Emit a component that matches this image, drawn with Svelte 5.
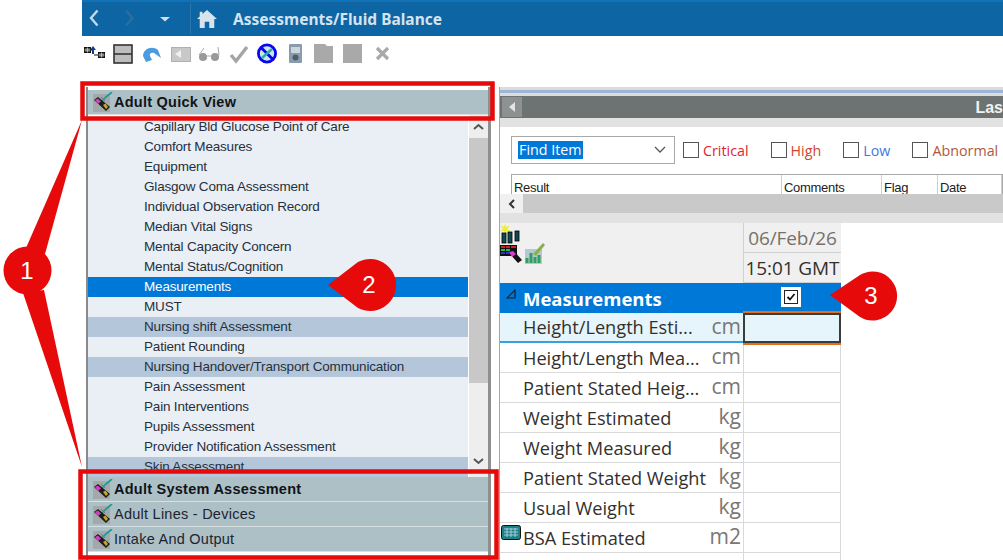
<script>
  // Fluid balance view, with the numbered callouts drawn on top
  const bands = ["Nursing shift Assessment", "Nursing Handover/Transport Communication", "Skin Assessment"];
  const items = [
    "Capillary Bld Glucose Point of Care",
    "Comfort Measures",
    "Equipment",
    "Glasgow Coma Assessment",
    "Individual Observation Record",
    "Median Vital Signs",
    "Mental Capacity Concern",
    "Mental Status/Cognition",
    "Measurements",
    "MUST",
    "Nursing shift Assessment",
    "Patient Rounding",
    "Nursing Handover/Transport Communication",
    "Pain Assessment",
    "Pain Interventions",
    "Pupils Assessment",
    "Provider Notification Assessment",
    "Skin Assessment",
  ];
  const measures = [
    ["Height/Length Esti...", "cm"],
    ["Height/Length Mea...", "cm"],
    ["Patient Stated Heig...", "cm"],
    ["Weight Estimated", "kg"],
    ["Weight Measured", "kg"],
    ["Patient Stated Weight", "kg"],
    ["Usual Weight", "kg"],
    ["BSA Estimated", "m2"],
  ];
  const flags = [
    ["Critical", "#e0242c"],
    ["High", "#d2452c"],
    ["Low", "#3f78e0"],
    ["Abnormal", "#b0593c"],
  ];
</script>

{#snippet penIcon()}
  <svg class="pen" width="20" height="20" viewBox="0 0 20 20">
    <rect x="0" y="2" width="17" height="18" fill="#a3a9ab" />
    <path d="M9 9 L13 5 L19 0" fill="none" stroke="#1f9a97" stroke-width="1.7" />
    <path d="M8 5 L12 9" stroke="#777" stroke-width="1" />
    <path d="M1 8 L5 5 L17 15 L13 19 Z" fill="#1c1c18" />
    <path d="M2 8 L5 6.5 L8 9.5 L5 12 Z" fill="#d23fc0" />
    <path d="M10 13 L12.5 11.5 L15 15 L13 17 Z" fill="#c9a626" />
  </svg>
{/snippet}

<div class="app">
  <header class="topbar">
    <svg class="nav" width="110" height="34" viewBox="0 0 110 34">
      <path d="M15.5 8.5 L9 16 L15.5 23.5" fill="none" stroke="#c4d8e8" stroke-width="2.4" />
      <path d="M44 8.5 L50.5 16 L44 23.5" fill="none" stroke="#2c6f9f" stroke-width="2.4" />
      <path d="M78 15 H88 L83 19.5 Z" fill="#cfdfeb" />
      <path d="M108.5 1 V32" stroke="#2a75ab" stroke-width="1" />
    </svg>
    <svg class="home" width="20" height="20" viewBox="0 0 22 20">
      <path d="M11 0 L22 10 H19 V20 H13.5 V13 H8.5 V20 H3 V10 H0 L3 7.2 V2 H6 V4.6 Z" fill="#d7e4ee" />
    </svg>
    <span class="title">Assessments/Fluid Balance</span>
  </header>

  <div class="toolbar">
    <svg width="310" height="24" viewBox="0 0 310 24">
      <rect x="2.5" y="6.5" width="6" height="5" fill="#555" stroke="#111" />
      <path d="M5.5 6.5 V11.5 M2.5 9 H8.5" stroke="#ddd" stroke-width="0.7" />
      <rect x="16.5" y="11.5" width="6" height="5" fill="#555" stroke="#111" />
      <path d="M19.5 11.5 V16.5 M16.5 14 H22.5" stroke="#ddd" stroke-width="0.7" />
      <path d="M11 5 L14 9 H12 V13 H10 V9 H8 Z" fill="#1a3a8c" />
      <path d="M8.5 9 H10 M12 14 H16" stroke="#111" />
      <rect x="32" y="4" width="18" height="18" fill="#bdbdbd" stroke="#333" stroke-width="1.6" />
      <path d="M32 13 H50" stroke="#333" stroke-width="1.6" />
      <path d="M61 15 C61 8 70 4 76 9 L79 17 L72 12 C69 11 67 13 68 15 L70 19 L64 21 Z" fill="#4a9be0" />
      <rect x="89.5" y="6.5" width="19" height="14" fill="#c8c8c8" stroke="#b0b0b0" />
      <path d="M93 13 L99 9 V17 Z" fill="#f0f0f0" />
      <circle cx="121" cy="16" r="4" fill="#999" /><circle cx="133" cy="16" r="4" fill="#999" />
      <path d="M117 14 L122 7 M125 15 H129 M137 14 L136 6" stroke="#aaa" fill="none" />
      <path d="M149 14 L154 20 L165 6" fill="none" stroke="#a5a5a5" stroke-width="3.4" />
      <circle cx="185" cy="12.5" r="8.6" fill="#c8e8e8" stroke="#0808e8" stroke-width="2.8" />
      <path d="M179 6.5 L191 18.5" stroke="#0808e8" stroke-width="2.8" />
      <path d="M180 17 L190 8" stroke="#30a8a8" stroke-width="2.4" />
      <rect x="207" y="3" width="13" height="19" rx="1" fill="#8a9cab" />
      <rect x="209" y="6" width="9" height="6" fill="#c9d6de" />
      <circle cx="213.5" cy="16.5" r="3" fill="#4e5e6b" />
      <path d="M232 3 H243 L245 5 H251 V22 H232 Z" fill="#a9a9a9" />
      <rect x="261" y="3" width="19" height="19" fill="#a9a9a9" />
      <path d="M295 7 L306 18 M306 7 L295 18" stroke="#a9a9a9" stroke-width="3.2" />
    </svg>
  </div>

  <div class="panes">
    <section class="left">
      <div class="band bold first">{@render penIcon()}Adult Quick View</div>
      <div class="list-wrap">
        <ul class="list">
          {#each items as item}
            <li class:shaded={bands.includes(item)} class:current={item === "Measurements"}>{item}</li>
          {/each}
        </ul>
        <div class="scroll">
          <svg width="19" height="23" viewBox="0 0 19 23"><path d="M5 14 L9.5 10 L14 14" fill="none" stroke="#555" stroke-width="2" /></svg>
          <div class="thumb"></div>
          <svg class="down" width="19" height="20" viewBox="0 0 19 20"><path d="M5 5 L9.5 9 L14 5" fill="none" stroke="#555" stroke-width="2" /></svg>
        </div>
      </div>
      <div class="band bold">{@render penIcon()}Adult System Assessment</div>
      <div class="band">{@render penIcon()}Adult Lines - Devices</div>
      <div class="band">{@render penIcon()}Intake And Output</div>
    </section>

    <section class="right">
      <div class="time-bar">
        <span class="back"><svg width="8" height="10" viewBox="0 0 8 10"><path d="M7 0 V10 L1 5 Z" fill="#e4e4e4" /></svg></span>
        <span class="last">Las</span>
      </div>
      <div class="filters">
        <div class="combo">
          <span class="find">Find Item</span>
          <svg width="12" height="8" viewBox="0 0 12 8"><path d="M1 1 L6 6 L11 1" fill="none" stroke="#555" stroke-width="1.3" /></svg>
        </div>
        {#each flags as [label, colour]}
          <span class="flag"><i class="box"></i><span style:color={colour}>{label}</span></span>
        {/each}
      </div>
      <div class="results">
        <span>Result</span><span>Comments</span><span>Flag</span><span>Date</span>
      </div>
      <div class="hscroll">
        <span><svg width="10" height="12" viewBox="0 0 10 12"><path d="M7 2 L3 6 L7 10" fill="none" stroke="#333" stroke-width="2" /></svg></span>
      </div>
      <div class="strip"></div>

      <div class="grid">
        <div class="icons">
          <svg width="46" height="42" viewBox="0 0 46 42">
            <path d="M5 0 L6 4 L10 2 L7 6 L11 8 L6 8 L5 12 L4 8 L0 8 L3 6 L0 2 L4 4 Z" fill="#eeee30" />
            <g fill="#0e4a50" stroke="#000" stroke-width="0.8">
              <rect x="2" y="10" width="4" height="10" /><rect x="8" y="9" width="4" height="11" /><rect x="15" y="8" width="4" height="10" />
            </g>
            <rect x="0" y="22" width="17" height="11" fill="#111" />
            <path d="M1 24 H5 M6 24 H10 M11 24 H16" stroke="#d02020" stroke-width="2" />
            <path d="M1 27 H5 M6 27 H10" stroke="#20c040" stroke-width="2" />
            <path d="M1 30 H5 M6 30 H10" stroke="#3030d0" stroke-width="2" />
            <path d="M9 30 L13 27 L22 37 L18 40 Z" fill="#111" />
            <path d="M9 29 L13 28 L16 31 L12 34 Z" fill="#d040d0" />
            <rect x="25" y="26" width="17" height="15" fill="#b4c8d4" />
            <path d="M27 40 V35 M31 40 V30 M35 40 V34 M39 40 V32" stroke="#30a060" stroke-width="3" />
            <path d="M33 31 L43 20 L45 22 L36 33 Z" fill="#88b050" />
          </svg>
        </div>
        <div class="date">06/Feb/26</div>
        <div class="date dark">15:01 GMT</div>
        <div class="section">
          <svg class="tri" width="10" height="10" viewBox="0 0 10 10"><path d="M1 9 H9 V1 Z" fill="none" stroke="#123" stroke-width="1.2" /></svg>
          <span>Measurements</span>
          <span class="tick"><svg width="20" height="20" viewBox="0 0 20 20"><rect width="20" height="20" fill="#fff" /><rect x="3.5" y="3.5" width="13" height="13" fill="#fff" stroke="#222" /><path d="M6.5 10 L9 12.5 L13.5 7" fill="none" stroke="#111" stroke-width="1.8" /></svg></span>
        </div>
        {#each measures as [name, unit], i}
          <div class="row" class:active={i === 0}>
            <span class="name">{name}</span><span class="unit">{unit}</span>
            {#if name === "BSA Estimated"}
              <svg class="calc" width="20" height="16" viewBox="0 0 20 16"><rect x="0.5" y="0.5" width="19" height="14" rx="2" fill="#1f7f86" stroke="#111" /><path d="M3 4 H17 M3 7 H17 M3 10 H17 M6 3 V12 M10 3 V12 M14 3 V12" stroke="#bde" stroke-width="0.8" /></svg>
            {/if}
          </div>
          <div class="cell" class:input={i === 0}></div>
        {/each}
        <div class="row"></div>
        <div class="cell"></div>
      </div>
    </section>
  </div>

  <!-- numbered callouts and red outlines, over everything -->
  <svg class="notes" width="1003" height="560" viewBox="0 0 1003 560">
    <g fill="none" stroke="#e60a0a" stroke-width="4.5">
      <rect x="82.5" y="83.5" width="410" height="35" />
      <rect x="80.5" y="471.5" width="416" height="86" />
    </g>
    <g fill="#e60a0a">
      <circle cx="27.5" cy="270.5" r="24" />
      <path d="M26 248 L82 120 L45 254 Z" />
      <path d="M23 293 L82 467 L44 290 Z" />
      <path d="M328 285 L358 262 A26 26 0 1 1 358 308 Z" />
      <path d="M830 295 L860 275 A24.5 24.5 0 1 1 860 317 Z" />
    </g>
    <g fill="#fff" font-family="Liberation Sans, sans-serif" font-size="24" text-anchor="middle">
      <text x="27" y="279">1</text>
      <text x="369" y="293">2</text>
      <text x="871" y="304">3</text>
    </g>
  </svg>
</div>

<style>
  :global(body) {
    margin: 0;
    background: #fff;
  }
  .app {
    position: relative;
    width: 1003px;
    height: 560px;
    padding-left: 82px;
    box-sizing: border-box;
    overflow: hidden;
    font-family: "Liberation Sans", sans-serif;
  }
  .topbar {
    display: flex;
    align-items: center;
    height: 36px;
    background: #0d65a3;
    border-top: 2px solid #1272b5;
    box-sizing: border-box;
  }
  .nav {
    flex: none;
  }
  .home {
    margin-left: 5px;
    flex: none;
  }
  .title {
    margin-left: 16px;
    color: #d5e3ee;
    font: 700 15.5px "Noto Sans", sans-serif;
  }
  .toolbar {
    height: 36px;
    padding-top: 5px;
    box-sizing: border-box;
  }
  .toolbar svg {
    display: block;
  }
  .panes {
    display: flex;
    margin-top: 15px;
    height: 473px;
  }
  .left {
    flex: none;
    width: 405px;
    margin-left: 4px;
    border-left: 2px solid #8a8a8a;
    border-right: 3px solid #8f8f8f;
    box-sizing: border-box;
  }
  .band {
    display: flex;
    align-items: center;
    gap: 1px;
    height: 25px;
    padding-left: 5px;
    background: #adc0c6;
    border-bottom: 1px solid #d8e0e3;
    box-sizing: border-box;
    color: #1c2430;
    font-size: 14.5px;
    letter-spacing: 0.25px;
  }
  .band.first {
    margin-top: 3px;
  }
  .bold {
    font-weight: 700;
    color: #10141a;
  }
  .pen {
    flex: none;
  }
  .list-wrap {
    display: flex;
    height: 362px;
    overflow: hidden;
  }
  .list {
    flex: 1;
    margin: 2px 1px 0 0;
    padding: 0;
    list-style: none;
    background: #eaeff6;
  }
  .list li {
    height: 20px;
    line-height: 19px;
    padding-left: 56px;
    color: #26303c;
    font-size: 13.5px;
    letter-spacing: -0.18px;
    box-sizing: border-box;
  }
  .list li.shaded {
    background: #b4c7da;
  }
  .list li.current {
    background: #0078d7;
    color: #fff;
  }
  .scroll {
    flex: none;
    width: 19px;
    display: flex;
    flex-direction: column;
    background: #eeeeee;
  }
  .scroll svg {
    flex: none;
    display: block;
  }
  .thumb {
    height: 245px;
    background: #c8c8c8;
  }
  .down {
    margin-top: auto;
    margin-bottom: 3px;
  }
  .right {
    flex: none;
    width: 504px;
    margin-left: 8px;
    border-left: 1px solid #a5a5a5;
    box-sizing: border-box;
  }
  .time-bar {
    display: flex;
    align-items: center;
    justify-content: space-between;
    height: 31px;
    padding: 9px 0 0 2px;
    box-sizing: border-box;
    background: linear-gradient(#dcdcdc 0 3px, #9db6d6 3px 6px, #dcdcdc 6px 9px, #6d7272 9px);
  }
  .back {
    display: flex;
    align-items: center;
    justify-content: center;
    width: 20px;
    height: 20px;
    background: #8d9191;
  }
  .last {
    color: #f2f2f2;
    font-weight: 700;
    font-size: 16px;
    padding-top: 2px;
  }
  .filters {
    display: flex;
    align-items: center;
    height: 28px;
    padding: 9px 0 0 11px;
    border-top: 9px solid #e2e2e2;
    color: #222;
    font: 14.3px "Open Sans", sans-serif;
  }
  .combo {
    flex: none;
    display: flex;
    align-items: center;
    justify-content: space-between;
    width: 164px;
    height: 28px;
    padding: 0 8px 0 6px;
    border: 1px solid #a8a8a8;
    box-sizing: border-box;
    color: #fff;
    margin-right: 8px;
  }
  .find {
    background: #0078d7;
    padding: 0 1px;
    line-height: 18px;
  }
  .flag {
    display: flex;
    align-items: center;
    gap: 4px;
    margin-right: 22px;
    white-space: nowrap;
  }
  .box {
    width: 16px;
    height: 16px;
    border: 1px solid #555;
    box-sizing: border-box;
    background: #fff;
  }
  .results {
    display: grid;
    grid-template-columns: 270px 100px 56px 1fr;
    height: 20px;
    margin: 10px 0 0 11px;
    border: 1px solid #a8a8a8;
    border-bottom: 0;
    box-sizing: border-box;
    overflow: hidden;
    color: #222;
    font-size: 13px;
    line-height: 25px;
    letter-spacing: -0.3px;
  }
  .results span {
    padding-left: 2px;
    border-right: 1px solid #cfcfcf;
  }
  .hscroll {
    height: 19px;
    background: #c9c9c9;
  }
  .hscroll span {
    display: flex;
    align-items: center;
    justify-content: center;
    width: 23px;
    height: 19px;
    background: #f0f0f0;
  }
  .strip {
    height: 10px;
    background: #e2e2e2;
  }
  .grid {
    display: grid;
    grid-template-columns: 243px 98px;
    grid-auto-rows: 30px;
    font: 18.2px "Open Sans", sans-serif;
    color: #33302c;
  }
  .icons {
    grid-row: span 2;
    background: #f0f0f0;
  }
  .icons svg {
    display: block;
  }
  .date {
    grid-column: 2;
    display: flex;
    align-items: center;
    justify-content: center;
    background: #f0f0f0;
    border-left: 1px solid #d0d0d0;
    border-bottom: 1px solid #d0d0d0;
    color: #77706a;
    font-size: 19px;
    letter-spacing: -0.1px;
    white-space: nowrap;
  }
  .date.dark {
    color: #33302c;
  }
  .section {
    grid-column: span 2;
    display: flex;
    align-items: center;
    position: relative;
    padding-left: 23px;
    background: #0078d7;
    color: #fff;
    font-weight: 700;
    font-size: 18.5px;
  }
  .tri {
    position: absolute;
    left: 6px;
    top: 6px;
  }
  .tick {
    position: absolute;
    left: 281px;
    top: 4px;
    height: 20px;
  }
  .tick svg {
    display: block;
  }
  .row {
    position: relative;
    display: flex;
    align-items: center;
    justify-content: space-between;
    padding: 0 2px 0 23px;
    border-bottom: 1px solid #d9d9d9;
    box-sizing: border-box;
    white-space: nowrap;
  }
  .row.active {
    background: #e6f4fb;
    border-bottom: 2px solid #3aa0e0;
  }
  .unit {
    color: #7b7672;
    font-size: 21px;
    line-height: 26px;
    margin-top: -3px;
  }
  .calc {
    position: absolute;
    left: 1px;
    top: 2px;
  }
  .cell {
    border-left: 1px solid #d9d9d9;
    border-right: 1px solid #d9d9d9;
    border-bottom: 1px solid #d9d9d9;
    box-sizing: border-box;
  }
  .cell.input {
    position: relative;
    background: #e6f4fb;
    border: 2px solid #3b3b3b;
    box-shadow: 0 -2px 0 #e2711d, 0 2px 0 #e2711d;
  }
  .notes {
    position: absolute;
    inset: 0;
    pointer-events: none;
  }
</style>
